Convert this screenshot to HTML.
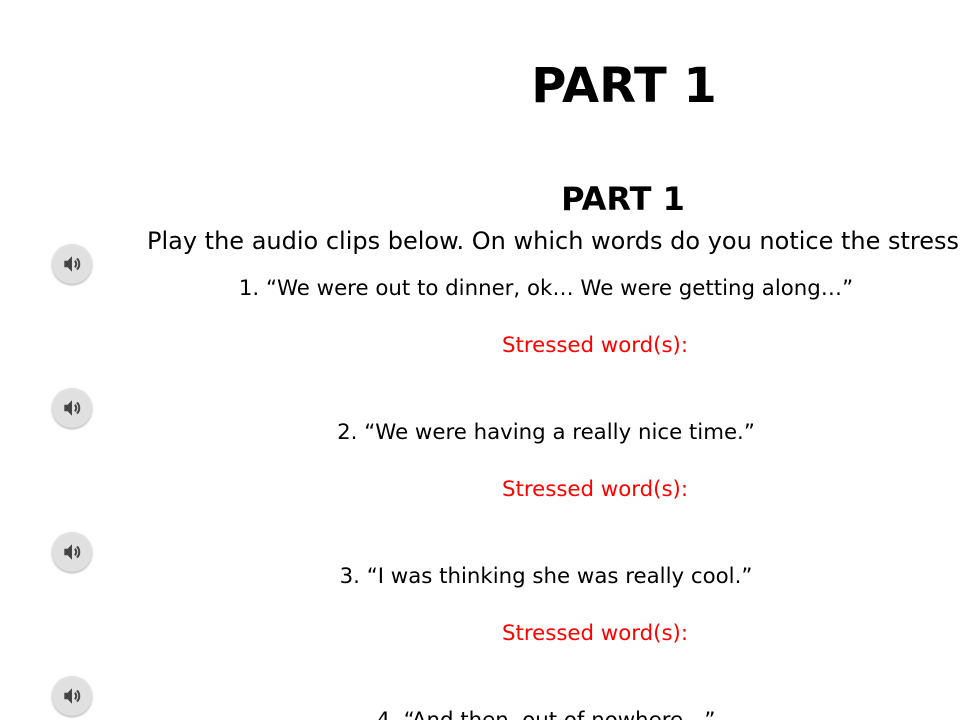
<!DOCTYPE html>
<html><head><meta charset="utf-8"><style>
html,body{margin:0;padding:0;background:#fff;width:960px;height:720px;overflow:hidden;position:relative;font-family:"DejaVu Sans","Liberation Sans",sans-serif;color:#000}
.t{position:absolute;white-space:nowrap;line-height:1}
.c{transform:translateX(-50%)}
.red{color:#f00}
.btn{position:absolute;left:52px;width:40px;height:40px;border-radius:50%;background:#e0e0e0;box-shadow:0 1px 2px rgba(0,0,0,.35)}
.btn svg{position:absolute;left:9px;top:9px}
</style></head><body>
<div class="t c" style="left:624px;top:62px;font-size:48px;font-weight:bold">PART 1</div>
<div class="t c" style="left:623px;top:183px;font-size:32px;font-weight:bold">PART 1</div>
<div class="t" style="left:147px;top:229px;font-size:24px">Play the audio clips below. On which words do you notice the stress?</div>
<div class="t c" style="left:546px;top:278px;font-size:21.3px">1. “We were out to dinner, ok… We were getting along…”</div>
<div class="t c red" style="left:595px;top:335px;font-size:21.3px">Stressed word(s):</div>
<div class="t c" style="left:546px;top:422px;font-size:21.3px">2. “We were having a really nice time.”</div>
<div class="t c red" style="left:595px;top:479px;font-size:21.3px">Stressed word(s):</div>
<div class="t c" style="left:546px;top:566px;font-size:21.3px">3. “I was thinking she was really cool.”</div>
<div class="t c red" style="left:595px;top:623px;font-size:21.3px">Stressed word(s):</div>
<div class="t c" style="left:546px;top:710px;font-size:21.3px">4. “And then, out of nowhere…”</div>
<div class="btn" style="top:244px"><svg width="22" height="22" viewBox="0 0 20 20"><path d="M3 7h3l4-4v14l-4-4H3z" fill="#444"/><path d="M12.5 7a4 4 0 0 1 0 6M14.5 5a7 7 0 0 1 0 10" stroke="#444" stroke-width="1.8" fill="none"/></svg></div>
<div class="btn" style="top:388px"><svg width="22" height="22" viewBox="0 0 20 20"><path d="M3 7h3l4-4v14l-4-4H3z" fill="#444"/><path d="M12.5 7a4 4 0 0 1 0 6M14.5 5a7 7 0 0 1 0 10" stroke="#444" stroke-width="1.8" fill="none"/></svg></div>
<div class="btn" style="top:532px"><svg width="22" height="22" viewBox="0 0 20 20"><path d="M3 7h3l4-4v14l-4-4H3z" fill="#444"/><path d="M12.5 7a4 4 0 0 1 0 6M14.5 5a7 7 0 0 1 0 10" stroke="#444" stroke-width="1.8" fill="none"/></svg></div>
<div class="btn" style="top:676px"><svg width="22" height="22" viewBox="0 0 20 20"><path d="M3 7h3l4-4v14l-4-4H3z" fill="#444"/><path d="M12.5 7a4 4 0 0 1 0 6M14.5 5a7 7 0 0 1 0 10" stroke="#444" stroke-width="1.8" fill="none"/></svg></div>
</body></html>
